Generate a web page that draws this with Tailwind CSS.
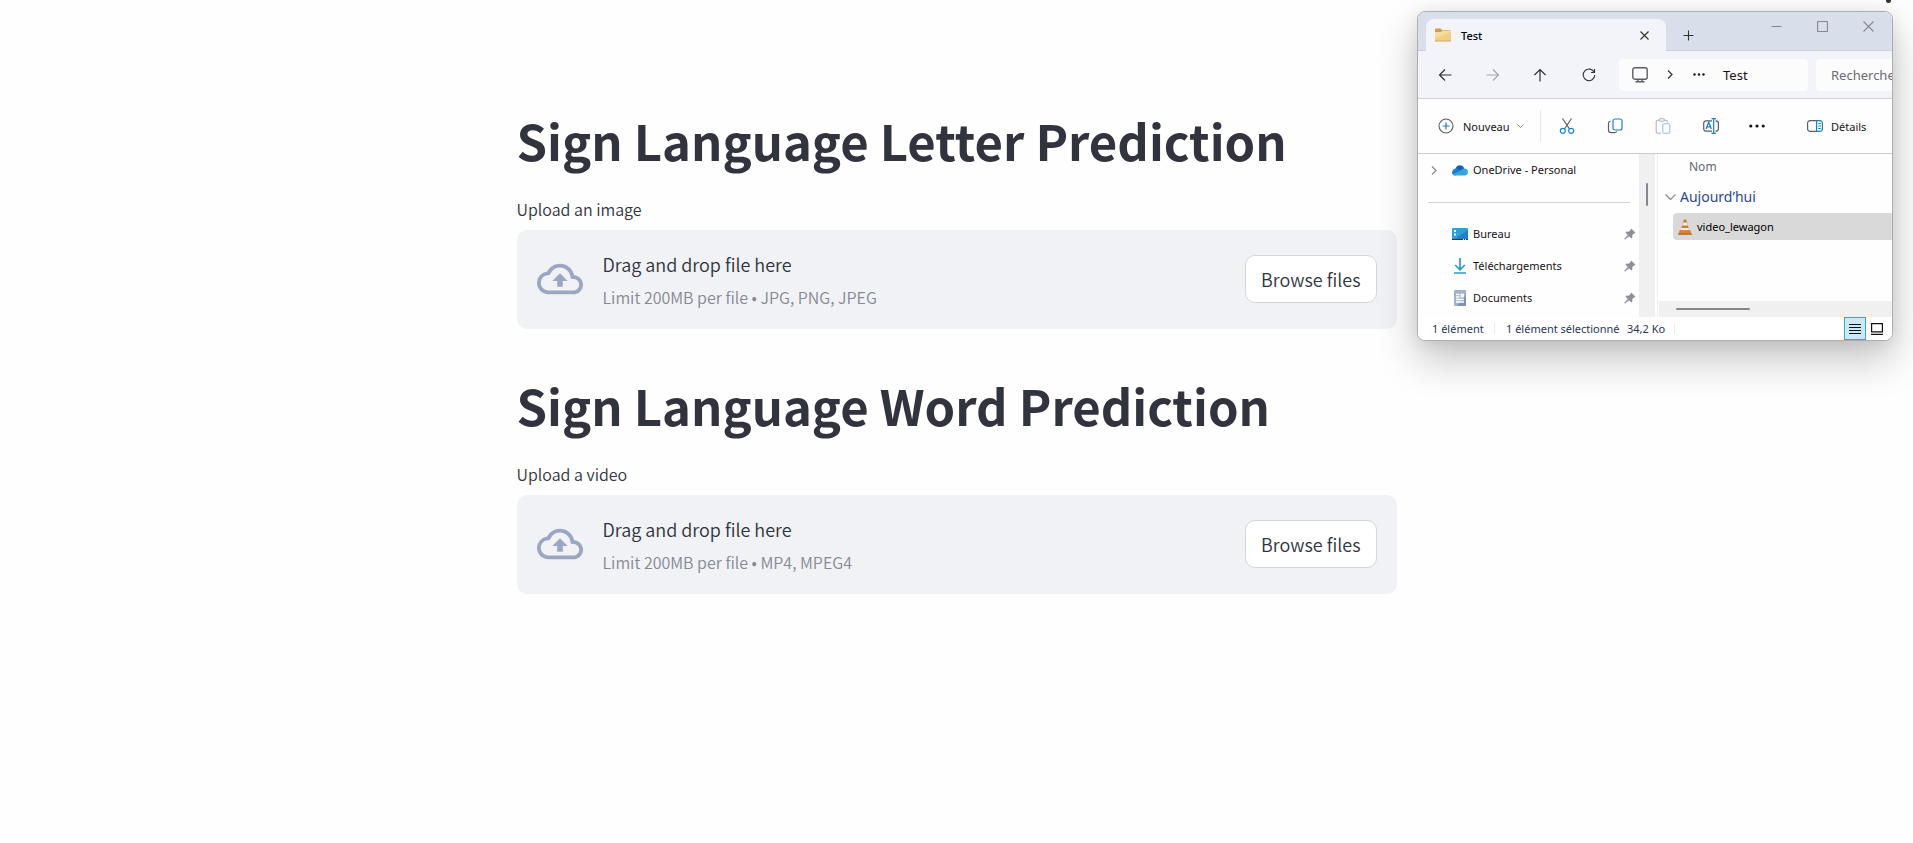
<!DOCTYPE html>
<html lang="en">
<head>
<meta charset="utf-8">
<meta name="viewport" content="width=device-width, initial-scale=1">
<title>Sign Language Prediction</title>
<script src="https://cdn.jsdelivr.net/npm/@tailwindcss/browser@4"></script>
</head>
<body class="relative min-h-screen overflow-x-hidden bg-[#fefefe] text-[#31333f] font-['Noto_Sans_CJK_JP','Noto_Sans',sans-serif]">

<svg class="hidden" aria-hidden="true">
  <symbol id="cloud" viewBox="0 0 24 24"><path fill="currentColor" d="M19.35 10.04A7.49 7.49 0 0 0 12 4C9.11 4 6.6 5.64 5.35 8.04A5.994 5.994 0 0 0 0 14c0 3.31 2.69 6 6 6h13c2.76 0 5-2.24 5-5 0-2.64-2.05-4.78-4.65-4.96zM19 18H6c-2.21 0-4-1.79-4-4 0-2.05 1.53-3.76 3.56-3.97l1.07-.11.5-.95A5.469 5.469 0 0 1 12 6c2.62 0 4.88 1.86 5.39 4.43l.3 1.5 1.53.11A2.98 2.98 0 0 1 22 15c0 1.65-1.35 3-3 3zM8 13h2.55v3h2.9v-3H16l-4-4z"/></symbol>
  <symbol id="pin" viewBox="0 0 12 12"><path fill="#8e8f9c" d="M7.2.6 11.4 4.800l-1 .7-.5-.1L8.200 7.300l.2 2.200-1 1L5.100 8.200 1.200 11.600.5 11.600.4 10.800 3.800 6.900 1.500 4.600l1-1 2.200.2L6.600 2.100 6.500 1.500z"/></symbol>
</svg>

<button type="button" aria-label="Menu" class="absolute right-[22px] top-0 h-[3px] w-[5px] rounded-b-full bg-[#31333f]"></button>

<main class="mx-auto w-full max-w-[880px] pt-[107px]">
  <section>
    <h1 class="text-[49px] leading-[66px] font-bold">Sign Language Letter Prediction</h1>
    <label for="image-file" class="mt-[22px] block text-[16px] leading-[28px] font-[350]">Upload an image</label>
    <input id="image-file" type="file" accept=".jpg,.png,.jpeg" class="hidden">
    <div class="mt-[7px] flex items-center rounded-[10px] bg-[#f0f2f6] px-5 pt-4 pb-[18px]">
      <svg class="size-[46px] shrink-0 text-[#9aa6c4]"><use href="#cloud"/></svg>
      <div class="ml-5 grow">
        <div class="text-[18px] leading-[37px] font-[350]">Drag and drop file here</div>
        <div class="text-[16px] leading-[28px] font-[350] text-[#868994]">Limit 200MB per file • JPG, PNG, JPEG</div>
      </div>
      <button type="button" class="h-12 rounded-[10px] border border-[#d6d6d9] bg-white px-[15px] text-[18px] leading-[26px] font-[350]">Browse files</button>
    </div>
  </section>
  <section class="mt-[43px]">
    <h1 class="text-[49px] leading-[66px] font-bold">Sign Language Word Prediction</h1>
    <label for="video-file" class="mt-[22px] block text-[16px] leading-[28px] font-[350]">Upload a video</label>
    <input id="video-file" type="file" accept=".mp4,.mpeg4" class="hidden">
    <div class="mt-[7px] flex items-center rounded-[10px] bg-[#f0f2f6] px-5 pt-4 pb-[18px]">
      <svg class="size-[46px] shrink-0 text-[#9aa6c4]"><use href="#cloud"/></svg>
      <div class="ml-5 grow">
        <div class="text-[18px] leading-[37px] font-[350]">Drag and drop file here</div>
        <div class="text-[16px] leading-[28px] font-[350] text-[#868994]">Limit 200MB per file • MP4, MPEG4</div>
      </div>
      <button type="button" class="h-12 rounded-[10px] border border-[#d6d6d9] bg-white px-[15px] text-[18px] leading-[26px] font-[350]">Browse files</button>
    </div>
  </section>
</main>

<!-- File explorer window floating over the page -->
<div lang="fr" class="absolute right-[20px] top-[11px] w-[476px] overflow-hidden rounded-lg border border-[#acaeb3] bg-white font-['Noto_Sans',sans-serif] text-[12px] leading-4 text-[#1a1018] shadow-[0_18px_40px_0_rgba(0,0,0,0.24),0_2px_16px_0_rgba(0,0,0,0.08)]">
  <div class="flex h-[39px] border-b border-[#ccd2de] bg-[#d8deea] pl-2 pt-[7px]">
    <div class="flex h-8 w-[240px] shrink-0 items-center rounded-t-lg bg-[#f3f4f9] pl-[9px] pr-[17px]">
      <svg class="h-[14px] w-4" viewBox="0 0 16 14"><path fill="#d79a52" d="M0 1.500C0 .7.600.5 1.300.5h4.200L7.500 2h7c.8 0 1.500.5 1.500 1.300V12H0z"/><path fill="#f8dc9a" d="M0 4h6l1.500-1.500H16V13H0z"/><path fill="#f2cf85" d="M0 10 16 4v8.500H0z"/><path stroke="#d9a052" d="M0 13h16"/></svg>
      <span class="ml-[10px] grow pt-0.5 text-[11px] font-medium text-black">Test</span>
      <button type="button" aria-label="Fermer l'onglet"><svg class="size-[9px]" viewBox="0 0 9 9" fill="none" stroke="#333" stroke-width="1.1"><path d="m.5.5 8 8m0-8-8 8"/></svg></button>
    </div>
    <button type="button" aria-label="Nouvel onglet" class="ml-[17px] mt-[11px] size-[11px]"><svg class="size-[11px]" viewBox="0 0 11 11" fill="none" stroke="#333" stroke-width="1.1"><path d="M5.500.5v10M.5 5.500h10"/></svg></button>
    <div class="ml-auto mr-[18px] mt-[2px] flex h-[11px] items-center gap-[35px]">
      <button type="button" aria-label="Réduire"><svg class="size-[11px]" viewBox="0 0 11 11" fill="none" stroke="#858792"><path d="M.5 5.500h10"/></svg></button>
      <button type="button" aria-label="Agrandir"><svg class="size-[11px]" viewBox="0 0 11 11" fill="none" stroke="#858792" stroke-width="1.200"><rect x=".5" y=".5" width="10" height="10" rx="1"/></svg></button>
      <button type="button" aria-label="Fermer"><svg class="size-[11px]" viewBox="0 0 11 11" fill="none" stroke="#858792" stroke-width="1.100"><path d="m.5.5 10 10m0-10-10 10"/></svg></button>
    </div>
  </div>

  <div class="flex h-[48px] items-center border-b border-[#d0d2d9] bg-[#f3f4f9] text-[13px]">
    <button type="button" aria-label="Précédent" class="ml-[20px]"><svg class="size-[14px]" viewBox="0 0 14 14" fill="none" stroke="#30303a" stroke-width="1.200"><path d="M13.500 7H1.500M7 1.500 1.500 7 7 12.500"/></svg></button>
    <button type="button" aria-label="Suivant" class="ml-[34px]"><svg class="size-[14px]" viewBox="0 0 14 14" fill="none" stroke="#a6a7ae" stroke-width="1.200"><path d="M.5 7h12M7 1.500 12.500 7 7 12.500"/></svg></button>
    <button type="button" aria-label="Dossier parent" class="ml-[33px]"><svg class="size-[14px]" viewBox="0 0 14 14" fill="none" stroke="#30303a" stroke-width="1.200"><path d="M7 13.500v-12M1.500 7 7 1.500 12.500 7"/></svg></button>
    <button type="button" aria-label="Actualiser" class="ml-[35px]"><svg class="size-[14px]" viewBox="0 0 14 14" fill="none" stroke="#30303a" stroke-width="1.100"><path d="M12.300 4.500A5.800 5.800 0 1 0 12.800 7M12.500 1v3.500H9"/></svg></button>
    <div class="ml-[23px] flex h-8 w-[189px] shrink-0 items-center rounded bg-[#fcfcfd]">
      <svg class="ml-[13px] size-4" viewBox="0 0 16 16" fill="none" stroke="#5b5c66" stroke-width="1.400"><rect x=".8" y=".8" width="14.400" height="11.400" rx="2"/><path d="M6 12.500v2m4-2v2M3.500 14.800h9"/></svg>
      <svg class="ml-[19px] h-[9px] w-[6px]" viewBox="0 0 6 9" fill="none" stroke="#30303a" stroke-width="1.200"><path d="M1 .5 5 4.500 1 8.500"/></svg>
      <svg class="ml-[20px] h-[3px] w-3" viewBox="0 0 12 3" fill="#1a1018"><circle cx="1.500" cy="1.500" r="1.200"/><circle cx="6" cy="1.500" r="1.200"/><circle cx="10.500" cy="1.500" r="1.200"/></svg>
      <span class="ml-[18px]">Test</span>
    </div>
    <input type="text" aria-label="Rechercher" placeholder="Rechercher dans : Test" class="ml-2 h-8 w-[180px] shrink-0 rounded bg-[#fcfcfd] pl-[15px] placeholder:text-[#686a74]">
  </div>

  <div class="flex h-[55px] items-center border-b border-[#c9cbd3] bg-[#fefefe] text-[11px]">
    <button type="button" class="ml-[20px] flex items-center">
      <svg class="size-4" viewBox="0 0 16 16" fill="none"><circle cx="8" cy="8" r="7" stroke="#5b5c66" stroke-width="1.100"/><path stroke="#1a7fc9" stroke-width="1.200" d="M8 4.500v7M4.500 8h7"/></svg>
      <span class="ml-[9px] w-[50px] pt-px text-left">Nouveau</span>
      <svg class="ml-[4px] h-[4px] w-[7px]" viewBox="0 0 7 4" fill="none" stroke="#8a8b93"><path d="m.5.5 3 3 3-3"/></svg>
    </button>
    <div class="ml-[16px] h-8 w-px bg-[#e9e9ec]"></div>
    <button type="button" aria-label="Couper" class="ml-[18px]"><svg class="size-4" viewBox="0 0 16 16" fill="none" stroke-width="1.200"><path stroke="#5b5c66" d="M3.500.5 10.500 11M12.500.5 5.500 11"/><circle cx="3.800" cy="12.800" r="2.500" stroke="#1a86c9"/><circle cx="12.200" cy="12.800" r="2.500" stroke="#1a86c9"/></svg></button>
    <button type="button" aria-label="Copier" class="ml-[32px]"><svg class="size-4" viewBox="0 0 16 16" fill="none" stroke-width="1.200"><path stroke="#5b5c66" d="M3.500 3C2 3.300 1.500 4 1.500 5.500V12c0 1.800 1 2.700 2.700 2.700H7.500c1.300 0 2-.4 2.300-1.400"/><rect x="6" y="1" width="9" height="11" rx="2" stroke="#1a7fc9"/></svg></button>
    <button type="button" aria-label="Coller" disabled class="ml-[32px]"><svg class="size-4" viewBox="0 0 16 16" fill="none" stroke-width="1.100"><path stroke="#b3b4ba" d="M6 15.300H3A1.800 1.800 0 0 1 1.200 13.500V4A1.800 1.800 0 0 1 3 2.200h1.500m4.500 0h1.500A1.800 1.800 0 0 1 12.300 4v.5"/><rect x="4.200" y=".8" width="5.200" height="2.400" rx="1.200" stroke="#b3b4ba"/><rect x="7.800" y="5.800" width="7" height="9.500" rx="1.200" stroke="#8cc8e8"/></svg></button>
    <button type="button" aria-label="Renommer" class="ml-[32px]"><svg class="size-4" viewBox="0 0 16 16" fill="none" stroke-width="1.200"><path stroke="#5b5c66" d="M9 2.800H3.200A2.500 2.500 0 0 0 .7 5.300v5.400a2.500 2.500 0 0 0 2.500 2.500H9M12.500 2.800c2 0 2.900.8 2.900 2.500v5.400c0 1.700-.9 2.500-2.900 2.500"/><path stroke="#1a7fc9" d="M8.500.6h4.400M8.500 15.400h4.400M10.700.6v14.800M3 11l2.700-6.800L8.400 11M4 8.800h3.500"/></svg></button>
    <button type="button" aria-label="Voir plus" class="ml-[30px]"><svg class="h-[4px] w-4" viewBox="0 0 16 4" fill="#1a1018"><circle cx="1.800" cy="2" r="1.600"/><circle cx="8" cy="2" r="1.600"/><circle cx="14.200" cy="2" r="1.600"/></svg></button>
    <button type="button" class="ml-[42px] flex items-center">
      <svg class="h-[12px] w-4" viewBox="0 0 16 12" fill="none" stroke-width="1.200"><path stroke="#5b5c66" d="M9.500.6H3A2.400 2.400 0 0 0 .6 3v6A2.400 2.400 0 0 0 3 11.400h6.500"/><path stroke="#1a7fc9" d="M9.600.6H13A2.400 2.400 0 0 1 15.400 3v6a2.400 2.400 0 0 1-2.400 2.400H9.600zM11.300 3.500h2.500m-2.500 2.500h2.500m-2.500 2.500h2.500"/></svg>
      <span class="ml-2 pt-px">Détails</span>
    </button>
  </div>

  <div class="flex h-[163px] bg-[#fefefe]">
    <nav class="w-[221px] shrink-0 text-[11px]">
      <a href="#" class="mt-[8px] flex h-4 items-center pl-[13px]">
        <svg class="h-[9px] w-[6px]" viewBox="0 0 6 9" fill="none" stroke="#8a8b93" stroke-width="1.300"><path d="M1 .5 5 4.500 1 8.500"/></svg>
        <svg class="ml-[15px] h-[11px] w-4" viewBox="0 0 16 11"><path fill="#1b62b4" d="M3.300 4C4 1.700 5.500.3 7.700.3c2.200 0 3.800 1 4.500 3.200L9 8z"/><path fill="#1d7fd0" d="M0 7.500C0 5.500 1.500 3.800 3.600 3.700c1.400 0 2.400.4 3.700 1.300L11 8l-8 2.500C1.200 10.400 0 9.200 0 7.500z"/><path fill="#35a6dc" d="M1 9.500 9.500 5C10.300 3.900 11.300 3.500 12.500 3.500 14.500 3.500 16 5 16 7s-1.500 3.500-3.500 3.500h-9C2.500 10.500 1.500 10.200 1 9.500z"/></svg>
        <span class="ml-[5px] whitespace-nowrap">OneDrive - Personal</span>
      </a>
      <hr class="ml-[10px] mr-[9px] mt-[24px] border-[#d2d2d6]">
      <a href="#" class="mt-[23px] flex h-4 items-center pl-[34px] pr-[3px]">
        <svg class="h-[12px] w-4" viewBox="0 0 16 12"><rect width="16" height="12" rx="1" fill="#2e9fd4"/><path fill="#2180c8" d="M16 2v9L3 11z"/><path fill="#173f73" d="M0 11h16v.5a.5.500 0 0 1-.5.500H.5a.5.500 0 0 1-.5-.5z"/><path fill="#e8f6ff" d="M2 2h2v2H2zm0 3.500h2v2H2zM11 11h1v1h-1zm2 0h1v1h-1z"/></svg>
        <span class="ml-[5px] grow">Bureau</span>
        <svg class="size-[12px]"><use href="#pin"/></svg>
      </a>
      <a href="#" class="mt-4 flex h-4 items-center pl-[34px] pr-[3px]">
        <svg class="size-4" viewBox="0 0 16 16" fill="none" stroke="#2a9bcb" stroke-width="1.700"><path d="M8 0v11.500M3.200 7 8 11.800 12.800 7M2 15h12"/></svg>
        <span class="ml-[5px] grow">Téléchargements</span>
        <svg class="size-[12px]"><use href="#pin"/></svg>
      </a>
      <a href="#" class="mt-4 flex h-4 items-center pl-[34px] pr-[3px]">
        <svg class="size-4" viewBox="0 0 16 16"><rect x="2" width="12" height="16" rx="1" fill="#a3b1cd"/><path fill="#7f90b5" d="M14 5v10a1 1 0 0 1-1 1H5z"/><path stroke="#fff" stroke-width="1.300" d="M4 4.500h3.500M4 7h3.500M4 9.500h8M4 12h8"/><path fill="#dfe8f8" stroke="#fff" d="M9 4h2.500v3H9z"/></svg>
        <span class="ml-[5px] grow">Documents</span>
        <svg class="size-[12px]"><use href="#pin"/></svg>
      </a>
    </nav>
    <div class="flex w-4 shrink-0 justify-center bg-[#f0f0f0] pt-[29px]"><div class="h-[23px] w-[2px] rounded bg-[#85858f]"></div></div>
    <div class="ml-[2px] flex grow flex-col border-l border-[#f0f0f2] pl-px">
      <button type="button" class="ml-[30px] mt-[5px] self-start leading-4 text-[#5e6670]">Nom</button>
      <button type="button" class="ml-[6px] mt-[11px] flex items-center self-start text-[14px] leading-[22px] text-[#2c4a8c]">
        <svg class="mr-[4px] h-[6px] w-[11px]" viewBox="0 0 11 6" fill="none" stroke="#8a8b93" stroke-width="1.200"><path d="m.5.5 5 5 5-5"/></svg>Aujourd’hui
      </button>
      <div class="ml-[14px] mt-[5px] flex h-[27px] items-center rounded-l-sm bg-[#d9d9d9] pl-[5px]">
        <svg class="h-4 w-[14px]" viewBox="0 0 14 16"><path fill="#d27a2c" d="M5.800.5h2.400L11.500 12h-9z"/><path fill="#efece8" d="m5 3.500-.9 3h5.800l-.9-3zM3.400 9l-.7 2.300h8.600L10.600 9z"/><path fill="#d68133" d="M1.800 11H4c.5 1.300 5.500 1.300 6 0h2.200l1.600 4.500H.2z"/><path fill="#b9662a" d="M.2 14.500h13.600v1.300H.2z"/></svg>
        <span class="ml-[5px] pt-px text-[11px] text-black">video_lewagon</span>
      </div>
      <div class="mt-auto flex h-4 items-center bg-[#f0f0f0] pl-[17px]"><div class="h-[2px] w-[74px] rounded bg-[#85858f]"></div></div>
    </div>
  </div>

  <div class="flex h-[23px] items-center bg-white pl-[14px] text-[11px] text-[#2b3557]">
    <span class="w-[53px] whitespace-nowrap">1 élément</span>
    <div class="ml-[9px] h-[11px] w-px bg-[#ececf0]"></div>
    <span class="ml-[11px] w-[121px] whitespace-nowrap">1 élément sélectionné</span>
    <span class="w-[38px] whitespace-nowrap">34,2 Ko</span>
    <div class="ml-[9px] h-[11px] w-px bg-[#ececf0]"></div>
    <button type="button" aria-label="Détails" class="ml-auto flex h-[23px] w-[22px] items-center justify-center border border-[#3ba3cf] bg-[#cce8f5]"><svg class="size-[12px]" viewBox="0 0 12 12" stroke="#111"><path d="M0 1.500h12M0 4.500h12M0 7.500h12M0 10.500h12"/></svg></button>
    <button type="button" aria-label="Grandes icônes" class="ml-[5px] mr-[9px]"><svg class="size-[12px]" viewBox="0 0 12 12" fill="none" stroke="#111" stroke-width="1.200"><path d="M.6.6h10.800v8.300H.6zM0 11.400h12"/></svg></button>
  </div>
</div>
</body>
</html>
